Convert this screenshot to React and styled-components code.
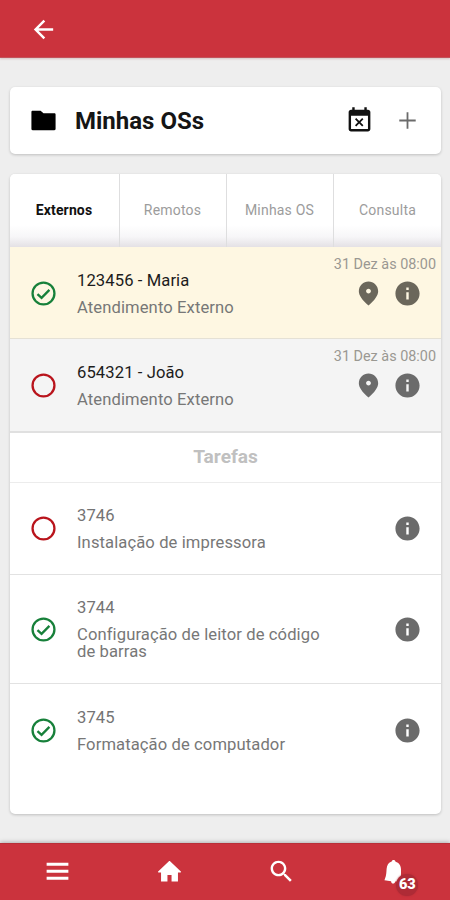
import React from 'react';
import styled, { createGlobalStyle } from 'styled-components';

const GlobalStyle = createGlobalStyle`
  * { box-sizing: border-box; }
  body { margin: 0; background: #eee; font-family: Roboto, "Liberation Sans", sans-serif; }
`;

const Screen = styled.div`
  width: 450px;
  height: 900px;
  display: flex;
  flex-direction: column;
  overflow: hidden;
  background: #eeeeee;
`;

const TopBar = styled.header`
  height: 58px;
  flex: none;
  display: flex;
  align-items: center;
  padding: 1px 29px 0;
  color: #fff;
  background: #cb333d;
  border-bottom: 1px solid #c2535b;
  box-shadow: 0 1px 2px rgba(150, 60, 60, 0.25);
`;

const Content = styled.main`
  flex: 1;
  padding: 29px 9px 0 10px;
`;

const Card = styled.section`
  background: #fff;
  border-radius: 5px;
  overflow: hidden;
  box-shadow: 0 1px 3px rgba(0, 0, 0, 0.2);
`;

const TitleCard = styled(Card)`
  height: 67px;
  margin-bottom: 20px;
  padding: 0 19px 0 19px;
  display: flex;
  align-items: center;
`;

const Title = styled.h1`
  flex: 1;
  margin: 0 0 0 17px;
  font-size: 24px;
  line-height: 28px;
  font-weight: 700;
  color: #151515;
`;

const TitleActions = styled.div`
  display: flex;
  gap: 19px;
`;

const ListCard = styled(Card)`
  height: 640px;
`;

const Tabs = styled.nav`
  height: 73px;
  display: grid;
  grid-template-columns: 110px 107px 107px 1fr;
  background: linear-gradient(#fff 0, #fff 70%, #f7f6f8 86%, #e4e1e5 100%);
`;

const Tab = styled.button`
  border: 0;
  border-right: 1px solid #dededf;
  padding: 0 1px 2px 0;
  background: none;
  font: ${(p) => (p.$active ? 700 : 400)} 14px Roboto, sans-serif;
  letter-spacing: ${(p) => (p.$active ? '0.15px' : '0.2px')};
  color: ${(p) => (p.$active ? '#111' : '#9c9c9c')};
  &:last-child { border-right: 0; padding-right: 0; }
`;

const Row = styled.article`
  height: ${(p) => p.$height}px;
  display: flex;
  align-items: center;
  padding: ${(p) => p.$inset || 0}px 19px 0 19px;
  background: ${(p) => p.$background || '#fff'};
  border-bottom: ${(p) => p.$line || '1px solid #e2e2e2'};
`;

const RowText = styled.div`
  flex: 1;
  margin-left: 19px;
  padding-right: ${(p) => (p.$wide ? 0 : 64)}px;
  font-size: 16.6px;
  line-height: 17px;
  letter-spacing: 0.1px;
`;

const Code = styled.div`
  line-height: 20px;
  margin-bottom: 8px;
  color: ${(p) => (p.$strong ? '#1c1c1c' : '#747474')};
`;

const Detail = styled.div`
  color: #777;
`;

const Side = styled.div`
  align-self: stretch;
  flex: none;
  display: flex;
  flex-direction: column;
  align-items: flex-end;
  justify-content: ${(p) => (p.$stamped ? 'flex-start' : 'center')};
`;

const Stamp = styled.time`
  margin: ${(p) => p.$top}px -14px 5px 0;
  font-size: 14.4px;
  line-height: 18px;
  white-space: nowrap;
  color: #9a9892;
`;

const Actions = styled.div`
  display: flex;
  gap: 10px;
  color: ${(p) => p.$tone || '#6b6b6b'};
`;

const SectionTitle = styled.h2`
  height: 50px;
  margin: 0;
  border-bottom: 1px solid #ececec;
  font-size: 19.1px;
  line-height: 48px;
  font-weight: 700;
  text-align: center;
  color: #c0c0c0;
`;

const BottomBar = styled.footer`
  height: 57px;
  flex: none;
  display: grid;
  grid-template-columns: repeat(4, 1fr);
  justify-items: center;
  align-items: center;
  padding: 0 0 1px 1px;
  color: #fff;
  background: #cb333d;
  border-top: 1px solid #b92f38;
  box-shadow: 0 -1px 4px rgba(0, 0, 0, 0.25);
`;

const NavItem = styled.div`
  position: relative;
  height: 29px;
`;

const Badge = styled.span`
  position: absolute;
  left: 17px;
  top: 17px;
  width: 22px;
  height: 22px;
  border-radius: 50%;
  background: #ae2b36;
  box-shadow: 0 0 2px #ae2b36;
  font-size: 14.5px;
  line-height: 22px;
  font-weight: 900;
  text-align: center;
`;

const Svg = styled.svg`
  display: block;
  flex: none;
  width: 29px;
  height: 29px;
  fill: currentColor;
`;

const Ring = styled(Svg)`
  fill: none;
  stroke: ${(p) => (p.$done ? '#17803a' : '#b9141c')};
  stroke-width: 1.9;
`;

const PATHS = {
  back: 'M20 11H7.83l5.59-5.59L12 4l-8 8 8 8 1.41-1.41L7.83 13H20v-2z',
  folder: 'M9.6 4H3c-.6 0-1 .4-1 1v14c0 .6.4 1 1 1h18c.6 0 1-.4 1-1V7c0-.6-.4-1-1-1h-9z',
  busy: 'M9.31 17l2.44-2.44L14.19 17l1.06-1.06-2.44-2.44 2.44-2.44L14.19 10l-2.44 2.44L9.31 10l-1.06 1.06 2.44 2.44-2.44 2.44L9.31 17zM19 3h-1V1h-2v2H8V1H6v2H5c-1.11 0-1.99.9-1.99 2L3 19c0 1.1.89 2 2 2h14c1.1 0 2-.9 2-2V5c0-1.1-.9-2-2-2zm0 16H5V8h14v11z',
  plus: 'M18.8 12.75h-6.05v6.05h-1.5v-6.05H5.2v-1.5h6.05V5.2h1.5v6.05h6.05z',
  pin: 'M12 2c-4.2 0-8 3.22-8 8.2 0 3.32 2.67 7.25 8 11.8 5.33-4.55 8-8.48 8-11.8C20 5.22 16.2 2 12 2zm0 10c-1.1 0-2-.9-2-2s.9-2 2-2 2 .9 2 2-.9 2-2 2z',
  info: 'M12 2C6.48 2 2 6.48 2 12s4.48 10 10 10 10-4.48 10-10S17.52 2 12 2zm1 15h-2v-6h2v6zm0-8h-2V7h2v2z',
  menu: 'M3 4.8h18v2.4H3zM3 10.6h18v2.4H3zM3 16.4h18v2.4H3z',
  home: 'M10.3 20.2v-5.4h3.4v5.4H19v-7.4h2.1c.5 0 .6-.5.3-.8L12.7 3.7c-.4-.4-1-.4-1.4 0L2.6 12c-.3.3-.2.8.3.8H5v7.4z',
  search: 'M15.5 14h-.79l-.28-.27C15.41 12.59 16 11.11 16 9.5 16 5.91 13.09 3 9.5 3S3 5.91 3 9.5 5.91 16 9.5 16c1.61 0 3.09-.59 4.23-1.57l.27.28v.79l5 4.99L20.49 19l-4.99-5zm-6 0C7.01 14 5 11.99 5 9.5S7.01 5 9.5 5 14 7.01 14 9.5 11.99 14 9.5 14z',
  bell: 'M12 2.4c-.9 0-1.3.5-1.5 1.4C7.9 4.5 6.6 6.8 6.3 9.8c-.2 3-.3 4.7-.7 6.2L4.500 19.200l5.500.8c.1 1.300.7 2 1.700 2 .9 0 1.500-.6 1.700-1.700l5 .2.7-1.600-.9-3.300V10.300c0-3.200-1.700-5.600-4.500-6.400-.2-1-.8-1.500-1.700-1.500z',
};

const Icon = ({ name }) => (
  <Svg viewBox="0 0 24 24" aria-hidden="true">
    <path fillRule="evenodd" d={PATHS[name]} />
  </Svg>
);

const Status = ({ done }) => (
  <Ring viewBox="0 0 24 24" $done={done}>
    <circle cx="12" cy="12" r="9.05" />
    {done && <path d="M7 12.5l3.4 3.1 6.5-6.6" />}
  </Ring>
);

const TABS = ['Externos', 'Remotos', 'Minhas OS', 'Consulta'];

const ORDERS = [
  { code: '123456 - Maria', done: true, height: 92, inset: 1, stampTop: 8, background: '#fef7e2', tone: '#6b675b', line: '1px solid #e5e1d5' },
  { code: '654321 - João', done: false, height: 94, inset: 0, stampTop: 9, background: '#f4f4f4', line: '2px solid #e0e0e0' },
];

const TASKS = [
  { code: '3746', text: 'Instalação de impressora', done: false, height: 92 },
  { code: '3744', text: 'Configuração de leitor de código de barras', done: true, height: 109 },
  { code: '3745', text: 'Formatação de computador', done: true, height: 93, line: '0' },
];

export default function App() {
  return (
    <Screen>
      <GlobalStyle />
      <TopBar>
        <Icon name="back" />
      </TopBar>
      <Content>
        <TitleCard>
          <Icon name="folder" />
          <Title>Minhas OSs</Title>
          <TitleActions>
            <Actions $tone="#111">
              <Icon name="busy" />
            </Actions>
            <Actions>
              <Icon name="plus" />
            </Actions>
          </TitleActions>
        </TitleCard>
        <ListCard>
          <Tabs>
            {TABS.map((label, i) => (
              <Tab key={label} $active={i === 0}>{label}</Tab>
            ))}
          </Tabs>
          {ORDERS.map((o) => (
            <Row key={o.code} $height={o.height} $inset={o.inset} $background={o.background} $line={o.line}>
              <Status done={o.done} />
              <RowText $wide>
                <Code $strong>{o.code}</Code>
                <Detail>Atendimento Externo</Detail>
              </RowText>
              <Side $stamped>
                <Stamp $top={o.stampTop}>31 Dez às 08:00</Stamp>
                <Actions $tone={o.tone}>
                  <Icon name="pin" />
                  <Icon name="info" />
                </Actions>
              </Side>
            </Row>
          ))}
          <SectionTitle>Tarefas</SectionTitle>
          {TASKS.map((t) => (
            <Row key={t.code} $height={t.height} $line={t.line}>
              <Status done={t.done} />
              <RowText>
                <Code>{t.code}</Code>
                <Detail>{t.text}</Detail>
              </RowText>
              <Side>
                <Actions>
                  <Icon name="info" />
                </Actions>
              </Side>
            </Row>
          ))}
        </ListCard>
      </Content>
      <BottomBar>
        <NavItem><Icon name="menu" /></NavItem>
        <NavItem><Icon name="home" /></NavItem>
        <NavItem><Icon name="search" /></NavItem>
        <NavItem>
          <Icon name="bell" />
          <Badge>63</Badge>
        </NavItem>
      </BottomBar>
    </Screen>
  );
}
